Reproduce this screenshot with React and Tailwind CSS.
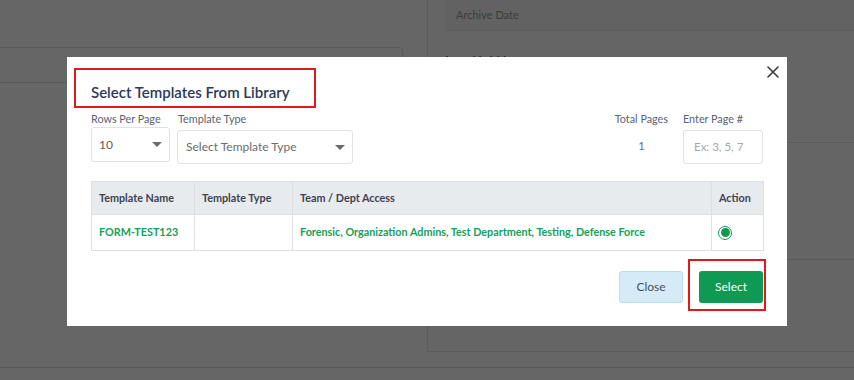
import React from "react";

const font = { fontFamily: "Lato, 'Noto Sans', sans-serif" };

function Caret({ className = "" }) {
  return (
    <svg width="10" height="5" viewBox="0 0 10 5" className={className}>
      <path d="M0 0 L10 0 L5 5 Z" fill="#6b6b6b" />
    </svg>
  );
}

export default function App() {
  return (
    <div
      className="relative w-[854px] h-[380px] overflow-hidden bg-[#666666] font-['Lato','Noto_Sans',sans-serif]"
      style={font}
    >
      {/* Background page (dimmed) */}
      <div className="flex h-[368px] border-b border-[#595959]">
        <div className="w-[427px] pt-[47px]">
          <div className="ml-[-10px] w-[413px] h-[36px] border border-[#5a5a5a] rounded-tr-[4px]"></div>
        </div>
        <div className="flex-1 h-[352px] bg-[#646564] border-l border-b border-[#5a5b5a] pl-[17px]">
          <div className="h-[31px] bg-[#616261] rounded-bl-[4px] border-b border-[#5c5d5c] pl-[11px] flex items-center text-[11px] text-[#3c3d3c]">
            Archive Date
          </div>
          <div className="mt-[22px] text-[13px] font-bold text-[#2a2b2a] leading-[16px]">
            Last Hold by
          </div>
          <div className="mt-[73px] border-t border-[#5a5b5a] h-[117px]"></div>
          <div className="border-t border-[#5a5b5a]"></div>
        </div>
      </div>

      {/* Modal */}
      <div className="absolute left-[67px] top-[57px] w-[720px] h-[269px] bg-white px-[24px]">
        {/* annotation box around title */}
        <div className="absolute left-[7px] top-[11px] w-[242px] h-[40px] border-2 border-[#e0191e]"></div>
        {/* close */}
        <button className="absolute left-[700px] top-[9px] w-[12px] h-[12px] flex items-center justify-center">
          <svg width="12" height="12" viewBox="0 0 12 12">
            <path d="M1 1 L11 11 M11 1 L1 11" stroke="#3a3a3a" strokeWidth="1.6" strokeLinecap="round" />
          </svg>
        </button>

        <div className="pt-[23px] h-[47px]">
          <div className="h-[24px] leading-[24px] text-[15px] font-semibold text-[#2b3859]">
            Select Templates From Library
          </div>
        </div>

        {/* filters */}
        <div className="mt-[8px] flex items-start">
          <div className="flex flex-col w-[79px]">
            <div className="h-[14px] leading-[14px] text-[10.8px] text-[#5b6272]">Rows Per Page</div>
            <div className="mt-[1px] h-[35px] border border-[#dfe2e6] rounded-[3px] flex items-center justify-between pl-[7px] pr-[7px]">
              <span className="text-[12px] text-[#6a5a4a]">10</span>
              <Caret />
            </div>
          </div>
          <div className="ml-[7px] flex flex-col w-[176px]">
            <div className="h-[14px] leading-[14px] text-[10.8px] text-[#5b6272] pl-[1px]">Template Type</div>
            <div className="mt-[4px] h-[34px] border border-[#dfe2e6] rounded-[3px] flex items-center justify-between pl-[8px] pr-[7px]">
              <span className="text-[12px] text-[#6b6b6b]">Select Template Type</span>
              <Caret />
            </div>
          </div>
          <div className="flex-1"></div>
          <div className="flex flex-col items-center">
            <div className="h-[14px] leading-[14px] text-[10.8px] text-[#5b6272]">Total Pages</div>
            <div className="mt-[13px] text-[11px] text-[#4a72a8] leading-[14px]">1</div>
          </div>
          <div className="ml-[15px] flex flex-col w-[80px]">
            <div className="h-[14px] leading-[14px] text-[10.8px] text-[#5b6272]">Enter Page #</div>
            <div className="mt-[4px] h-[34px] border border-[#dfe2e6] rounded-[3px] flex items-center pl-[10px]">
              <span className="text-[11.5px] text-[#a8a8a8]">Ex: 3, 5, 7</span>
            </div>
          </div>
        </div>

        {/* table */}
        <table className="mt-[17px] w-[672px] border-collapse table-fixed text-[10.8px]">
          <colgroup>
            <col className="w-[103px]" />
            <col className="w-[98px]" />
            <col className="w-[419px]" />
            <col className="w-[52px]" />
          </colgroup>
          <thead>
            <tr className="h-[33px] bg-[#e8ebee]">
              <th className="border border-[#dcdfe3] text-left pl-[7px] font-bold text-[#3d4452]">Template Name</th>
              <th className="border border-[#dcdfe3] text-left pl-[7px] font-bold text-[#3d4452]">Template Type</th>
              <th className="border border-[#dcdfe3] text-left pl-[7px] font-bold text-[#3d4452]">Team / Dept Access</th>
              <th className="border border-[#dcdfe3] text-left pl-[7px] font-bold text-[#3d4452]">Action</th>
            </tr>
          </thead>
          <tbody>
            <tr className="h-[36px]">
              <td className="border border-[#dcdfe3] pl-[7px] font-bold text-[#16a05a]">FORM-TEST123</td>
              <td className="border border-[#dcdfe3]"></td>
              <td className="border border-[#dcdfe3] pl-[7px] font-bold text-[#16a05a]">
                Forensic, Organization Admins, Test Department, Testing, Defense Force
              </td>
              <td className="border border-[#dcdfe3] pl-[6px]">
                <div className="w-[14px] h-[14px] rounded-full border border-[#0e9a52] bg-white p-[1.5px]">
                  <div className="w-full h-full rounded-full bg-[#0e9a52]"></div>
                </div>
              </td>
            </tr>
          </tbody>
        </table>

        {/* footer */}
        <div className="mt-[20px] flex justify-end gap-[16px]">
          <button className="w-[64px] h-[32px] rounded-[3px] bg-[#d5ecf8] border border-[#b9dcee] text-[12px] text-[#4a4f57]">
            Close
          </button>
          <button className="w-[64px] h-[32px] rounded-[3px] bg-[#0e9a52] text-[12px] text-white">
            Select
          </button>
        </div>
        {/* annotation box around select */}
        <div className="absolute left-[621px] top-[202px] w-[78px] h-[52px] border-2 border-[#e0191e]"></div>
      </div>
    </div>
  );
}
